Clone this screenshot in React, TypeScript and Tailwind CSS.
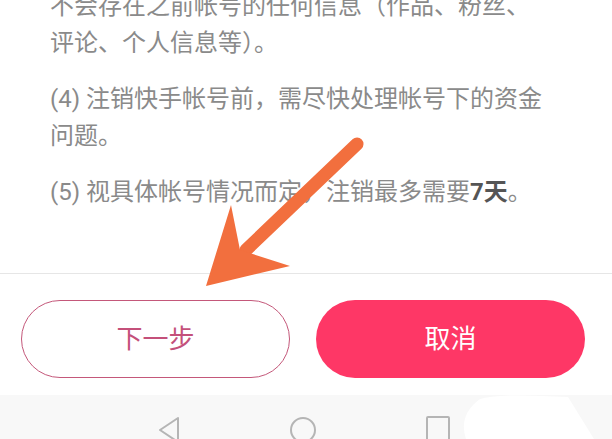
import React from "react";

const font = { fontFamily: 'Roboto, "Noto Sans CJK SC", sans-serif' };

function NavBar() {
  return (
    <div className="relative h-[44px] bg-[#f8f8f8] flex justify-center items-start pt-[20px] gap-[106px]">
      <svg width="26" height="30" viewBox="0 0 26 30" className="ml-[-4px]">
        <path d="M22 3 L4 15 L22 27 Z" fill="none" stroke="#b5b5b5" strokeWidth="2" strokeLinejoin="round" />
      </svg>
      <svg width="30" height="30" viewBox="0 0 30 30">
        <circle cx="15" cy="15" r="12" fill="none" stroke="#b5b5b5" strokeWidth="2" />
      </svg>
      <svg width="28" height="30" viewBox="0 0 28 30">
        <rect x="3" y="2" width="22" height="26" rx="1" fill="none" stroke="#b5b5b5" strokeWidth="2" />
      </svg>
      {/* bright blotch at right of the bar */}
      <svg className="absolute left-[458px] top-[0px]" width="140" height="44" viewBox="0 0 140 44">
        <path d="M22 4 Q40 -2 110 2 L136 44 L8 44 Q0 20 22 4 Z" fill="#ffffff" />
      </svg>
    </div>
  );
}

function Arrow() {
  return (
    <svg className="absolute left-0 top-0 pointer-events-none" width="612" height="439" viewBox="0 0 612 439">
      <line x1="357" y1="144" x2="246" y2="250" stroke="#f26f3e" strokeWidth="13" strokeLinecap="round" />
      <path d="M206 286 L231 205 L240 250 L290 266 Z" fill="#f26f3e" />
    </svg>
  );
}

export default function App() {
  return (
    <div className="relative w-[612px] h-[439px] bg-white overflow-hidden" style={font}>
      <div className="h-[274px] overflow-hidden border-b border-[#e6e6e6] pl-[50px] text-[24px] leading-[37px] text-[#8a8a8a] whitespace-nowrap">
        <p className="-mt-[12px]">
          不会存在之前帐号的任何信息（作品、粉丝、
          <br />
          评论、个人信息等）。
        </p>
        <p className="mt-[19px]">
          (4) 注销快手帐号前，需尽快处理帐号下的资金
          <br />
          问题。
        </p>
        <p className="mt-[19px]">
          (5) 视具体帐号情况而定，注销最多需要<span className="font-bold text-[#555555]">7天</span>。
        </p>
      </div>

      <div className="h-[121px] flex items-start gap-[26px] px-[21px] pt-[26px]">
        <button className="w-[269px] h-[78px] rounded-full border-[1.5px] border-[#c4587a] text-[#c4507a] text-[26px]">
          下一步
        </button>
        <button className="w-[269px] h-[78px] rounded-full bg-[#fe3766] text-white text-[26px]">
          取消
        </button>
      </div>

      <NavBar />
      <Arrow />
    </div>
  );
}
